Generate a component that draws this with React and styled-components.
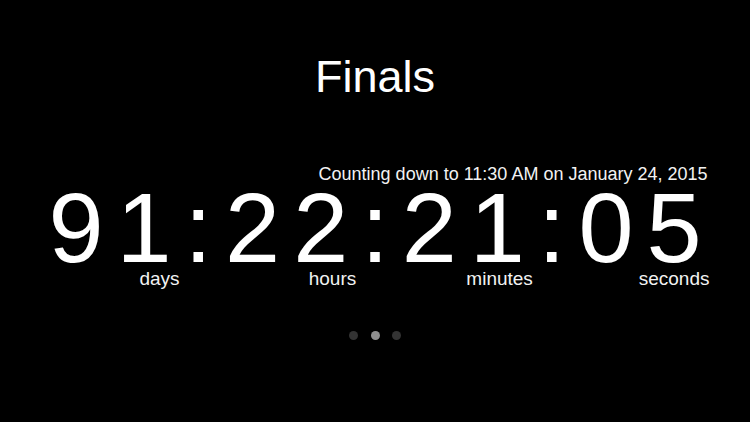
import React from "react";
import styled, { createGlobalStyle } from "styled-components";

const GlobalStyle = createGlobalStyle`
  html, body {
    margin: 0;
    padding: 0;
    background: #000;
  }
  body {
    font-family: "Liberation Sans", Arial, sans-serif;
    color: #fff;
  }
`;

const units = [
  { value: "91", label: "days" },
  { value: "22", label: "hours" },
  { value: "21", label: "minutes" },
  { value: "05", label: "seconds" },
];

export default function App() {
  return (
    <>
      <GlobalStyle />
      <Screen>
        <Title>Finals</Title>
        <Countdown>
          <Subtitle>Counting down to 11:30 AM on January 24, 2015</Subtitle>
          <Clock>
            {units.map((u, i) => (
              <React.Fragment key={u.label}>
                {i > 0 && <Colon>:</Colon>}
                <Group>
                  <Number>{u.value}</Number>
                  <Label>{u.label}</Label>
                </Group>
              </React.Fragment>
            ))}
          </Clock>
        </Countdown>
        <Pager>
          <Dot />
          <Dot $active />
          <Dot />
        </Pager>
      </Screen>
    </>
  );
}

const Screen = styled.div`
  width: 750px;
  height: 422px;
  box-sizing: border-box;
  padding-top: 54px;
  display: flex;
  flex-direction: column;
  align-items: center;
  background: #000;
  overflow: hidden;
`;

const Title = styled.h1`
  margin: 0;
  font-size: 45px;
  line-height: 46px;
  font-weight: 400;
  color: #fff;
`;

const Countdown = styled.div`
  margin-top: 65px;
  display: flex;
  flex-direction: column;
  width: fit-content;
`;

const Subtitle = styled.div`
  font-size: 18px;
  line-height: 18px;
  text-align: right;
  margin-right: -6px;
  color: #f2f2f2;
`;

const Clock = styled.div`
  display: flex;
  align-items: flex-start;
  gap: 13px;
  margin-top: 5px;
`;

const Group = styled.div`
  display: flex;
  flex-direction: column;
`;

const Number = styled.span`
  font-size: 99px;
  line-height: 80px;
  letter-spacing: 13px;
  margin-right: -13px;
  color: #fff;
`;

const Colon = styled.span`
  font-size: 99px;
  line-height: 80px;
  color: #fff;
`;

const Label = styled.span`
  font-size: 19px;
  line-height: 19px;
  margin-top: 1px;
  margin-right: -8px;
  text-align: right;
  color: #f2f2f2;
`;

const Pager = styled.div`
  margin-top: 43px;
  display: flex;
  gap: 12.5px;
`;

const Dot = styled.span`
  width: 9px;
  height: 9px;
  border-radius: 50%;
  background: ${(p) => (p.$active ? "#8f8f8f" : "#333")};
`;
